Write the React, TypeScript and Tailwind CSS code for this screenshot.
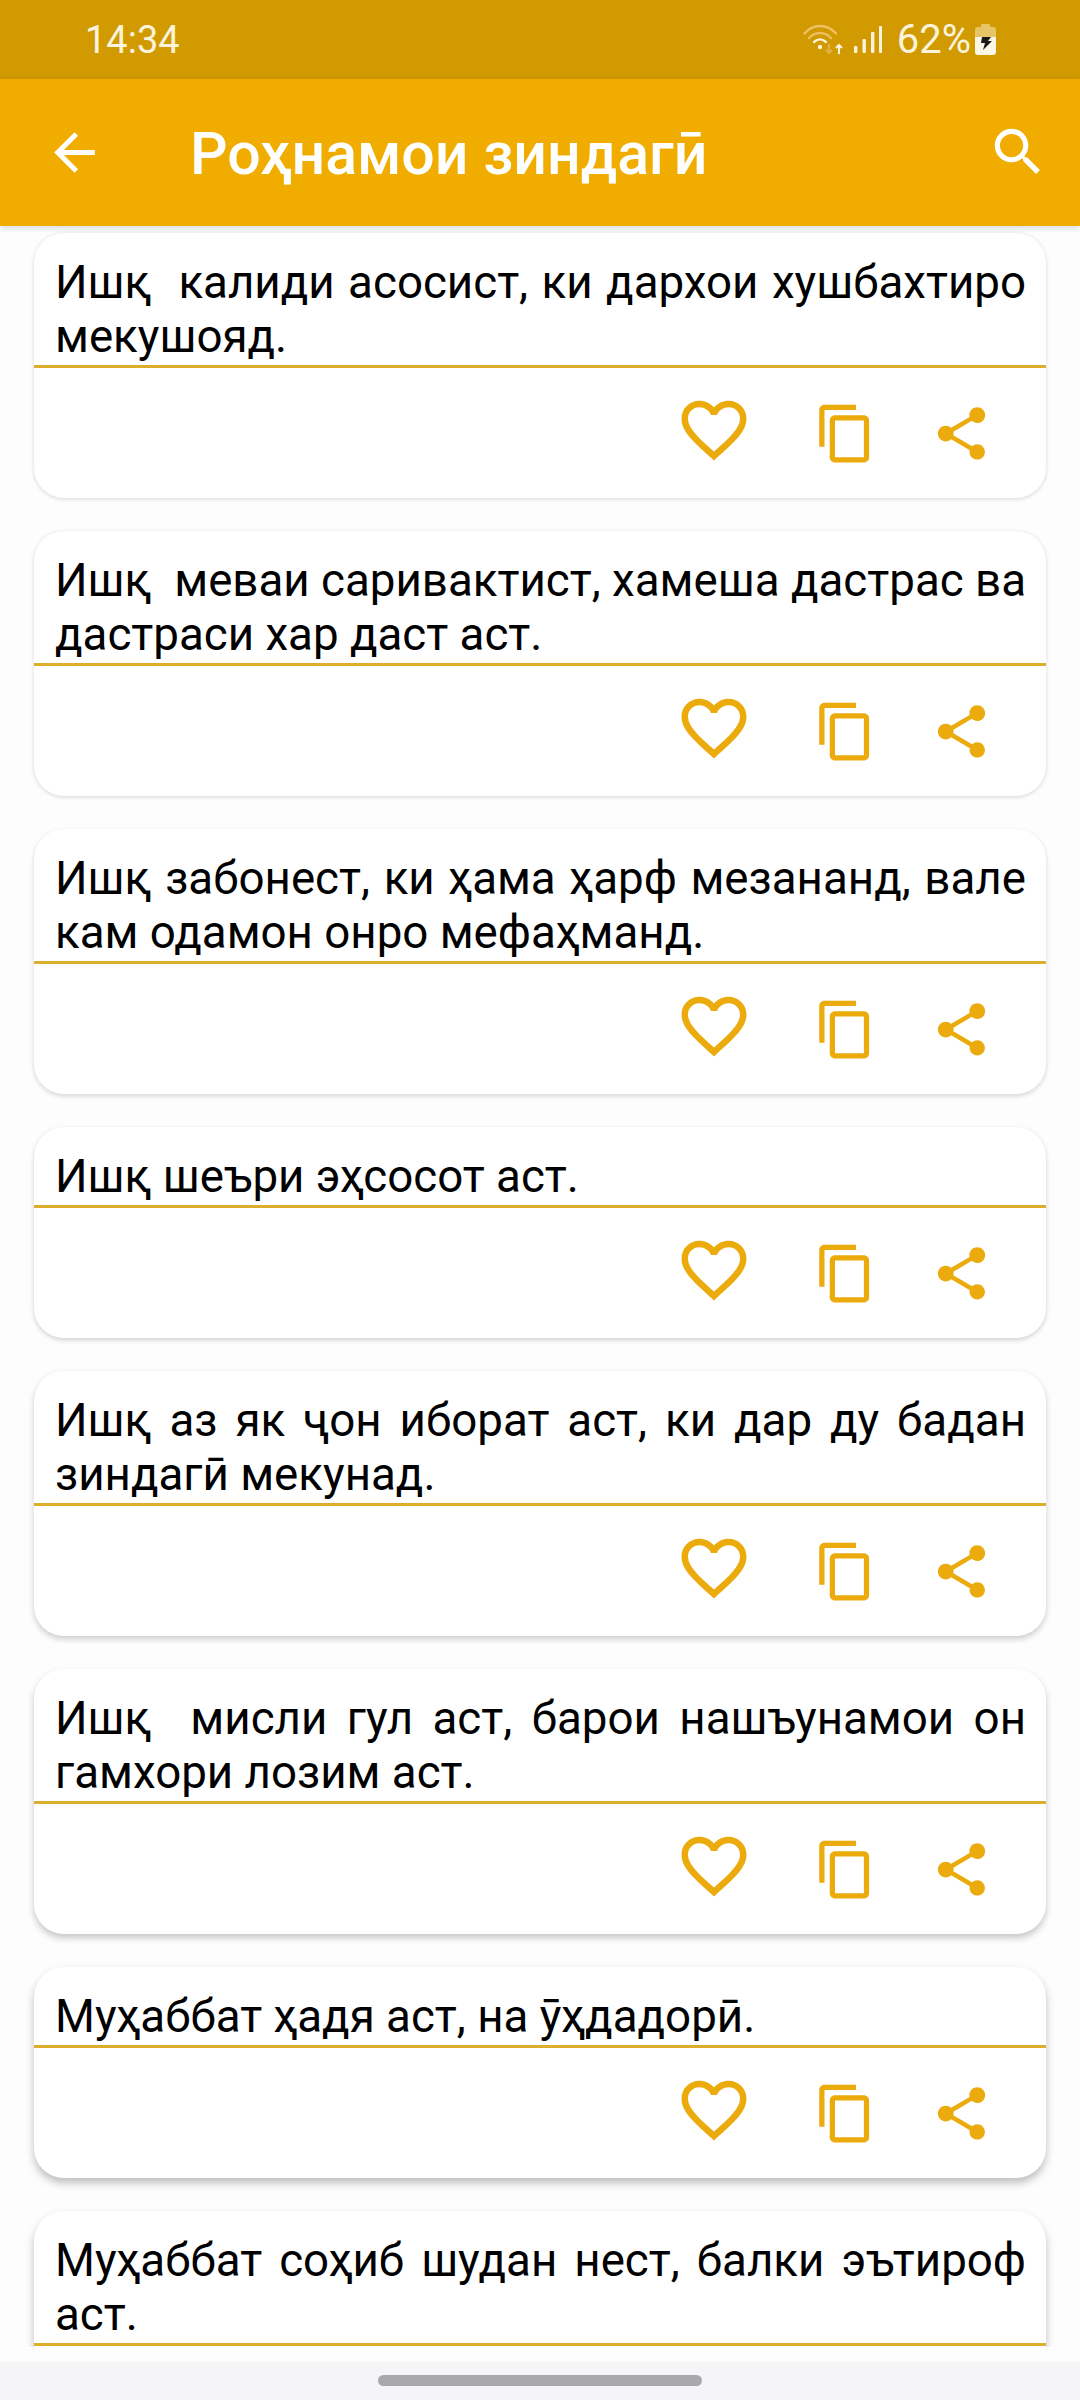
const HEART = "M16.5 3c-1.74 0-3.41.81-4.5 2.09C10.91 3.81 9.24 3 7.5 3 4.42 3 2 5.42 2 8.5c0 3.78 3.4 6.86 8.55 11.54L12 21.35l1.45-1.32C18.6 15.36 22 12.28 22 8.5 22 5.42 19.58 3 16.5 3zm-4.4 15.55l-.1.1-.1-.1C7.14 14.24 4 11.39 4 8.5 4 6.5 5.5 5 7.5 5c1.54 0 3.04.99 3.57 2.36h1.87C13.46 5.99 14.96 5 16.5 5c2 0 3.5 1.5 3.5 3.5 0 2.89-3.14 5.74-7.9 10.05z";
const COPY = "M16 1H4c-1.1 0-2 .9-2 2v14h2V3h12V1zm3 4H8c-1.1 0-2 .9-2 2v14c0 1.1.9 2 2 2h11c1.1 0 2-.9 2-2V7c0-1.1-.9-2-2-2zm0 16H8V7h11v14z";
const SHARE = "M18 16.08c-.76 0-1.44.3-1.96.77L8.91 12.7c.05-.23.09-.46.09-.7s-.04-.47-.09-.7l7.05-4.11c.54.5 1.25.81 2.04.81 1.66 0 3-1.34 3-3s-1.34-3-3-3-3 1.34-3 3c0 .24.04.47.09.7L8.04 9.81C7.5 9.31 6.79 9 6 9c-1.66 0-3 1.34-3 3s1.34 3 3 3c.79 0 1.5-.31 2.04-.81l7.12 4.16c-.05.21-.08.43-.08.65 0 1.61 1.31 2.92 2.92 2.92 1.61 0 2.92-1.31 2.92-2.92s-1.31-2.92-2.92-2.92z";

function Icon({ d, className }: { d: string; className: string }) {
  return (
    <svg viewBox="0 0 24 24" className={className} fill="currentColor">
      <path d={d} />
    </svg>
  );
}

const quotes = [
  { text: "Ишқ  калиди асосист, ки дархои хушбахтиро мекушояд.", shadow: "shadow-[0_1px_4px_rgba(0,0,0,0.16)]" },
  { text: "Ишқ  меваи саривактист, хамеша дастрас ва дастраси хар даст аст.", shadow: "shadow-[0_1px_4px_rgba(0,0,0,0.16)]" },
  { text: "Ишқ забонест, ки ҳама ҳарф мезананд, вале кам одамон онро мефаҳманд.", shadow: "shadow-[0_2px_5px_rgba(0,0,0,0.16)]" },
  { text: "Ишқ шеъри эҳсосот аст.", shadow: "shadow-[0_2px_5px_rgba(0,0,0,0.18)]" },
  { text: "Ишқ аз як ҷон иборат аст, ки дар ду бадан зиндагӣ мекунад.", shadow: "shadow-[0_3px_6px_rgba(0,0,0,0.2)]" },
  { text: "Ишқ  мисли гул аст, барои нашъунамои он гамхори лозим аст.", shadow: "shadow-[0_4px_7px_rgba(0,0,0,0.22)]" },
  { text: "Муҳаббат ҳадя аст, на ӯҳдадорӣ.", shadow: "shadow-[0_5px_8px_rgba(0,0,0,0.25)]" },
  { text: "Муҳаббат соҳиб шудан нест, балки эътироф аст.", shadow: "shadow-[0_5px_8px_rgba(0,0,0,0.25)]" },
];

function Card({ text, shadow }: { text: string; shadow: string }) {
  return (
    <div className={`mx-[34px] mb-[33px] shrink-0 rounded-[30px] bg-white ${shadow}`}>
      <p className="whitespace-pre-wrap pb-[1px] pl-[21px] pr-[20px] pt-[23px] text-justify text-[45.7px] leading-[54px] text-black [font-family:Roboto,sans-serif]">
        {text}
      </p>
      <div className="h-[3px] bg-[#dcae2c]" />
      <div className="flex h-[130px] items-center justify-end pr-[53px] text-[#ecab0c]">
        <Icon d={HEART} className="mb-[6px] h-[78px] w-[78px]" />
        <Icon d={COPY} className="ml-[61px] h-[63px] w-[63px]" />
        <Icon d={SHARE} className="ml-[53px] h-[63px] w-[63px]" />
      </div>
    </div>
  );
}

function StatusIcons() {
  return (
    <div className="flex items-center text-[#fbf3dc]">
      <svg viewBox="0 0 41 31" className="h-[31px] w-[41px]" fill="none">
        <path d="M1.5 9.5 C10 -0.5 24 -0.5 33 9.5" stroke="#eec166" strokeWidth="2.4" strokeLinecap="round" />
        <path d="M6 14 C12 7.5 22 7.5 28 14" stroke="#eec166" strokeWidth="2.4" strokeLinecap="round" />
        <path d="M11 18 C15 14.5 19 14.5 23 18" stroke="#fbf3dc" strokeWidth="2.4" strokeLinecap="round" />
        <circle cx="17" cy="23" r="2.2" fill="#fbf3dc" />
        <path d="M26 20v9M23 26l3 3 3-3" stroke="#e5b04c" strokeWidth="2" />
        <path d="M36 30v-9M33 24l3-3 3 3" stroke="#fbf3dc" strokeWidth="2" />
      </svg>
      <svg viewBox="0 0 28 27" className="ml-[10px] h-[27px] w-[28px]" fill="#fbf3dc">
        <rect x="0" y="20" width="3.4" height="7" rx="1" />
        <rect x="8.5" y="13" width="3.4" height="14" rx="1" />
        <rect x="17" y="6" width="3.4" height="21" rx="1" />
        <rect x="25" y="0" width="3" height="27" rx="1" />
      </svg>
      <span className="ml-[15px] text-[40px] leading-[44px] [font-family:Roboto,sans-serif]">62%</span>
      <svg viewBox="0 0 21 31" className="ml-[4px] h-[31px] w-[21px]">
        <rect x="6" y="0" width="9" height="4" rx="1" fill="#e8c468" />
        <path d="M0 6a3 3 0 0 1 3-3h15a3 3 0 0 1 3 3v7H0z" fill="#e8c468" />
        <path d="M0 13h21v15a3 3 0 0 1-3 3H3a3 3 0 0 1-3-3z" fill="#fbf6e6" />
        <path d="M7 13h9l-3 4h4l-9 9 2-7H6z" fill="#1a1a1a" />
      </svg>
    </div>
  );
}

export default function App() {
  return (
    <div className="flex h-[2400px] w-[1080px] flex-col overflow-hidden bg-[#fdfdfe]">
      <div className="flex h-[79px] shrink-0 items-center justify-between bg-[#d09a00] pl-[85px] pr-[84px] text-[#fbf3dc]">
        <span className="text-[38px] leading-[44px] [font-family:Roboto,sans-serif]">14:34</span>
        <StatusIcons />
      </div>
      <div className="z-10 flex h-[147px] shrink-0 items-center bg-[#f0ad00] pl-[44px] pr-[31px] text-white shadow-[0_2px_6px_rgba(0,0,0,0.15)]">
        <Icon d="M20 11H7.83l5.59-5.59L12 4l-8 8 8 8 1.41-1.41L7.83 13H20v-2z" className="h-[61px] w-[61px]" />
        <span className="ml-[85px] mt-[2px] flex-1 text-[59px] font-medium leading-[70px] [font-family:Roboto,sans-serif]">Роҳнамои зиндагӣ</span>
        <Icon d="M15.5 14h-.79l-.28-.27C15.41 12.59 16 11.11 16 9.5 16 5.91 13.09 3 9.5 3S3 5.91 3 9.5 5.91 16 9.5 16c1.61 0 3.09-.59 4.23-1.57l.27.28v.79l5 4.99L20.49 19l-4.99-5zm-6 0C7.01 14 5 11.99 5 9.5S7.01 5 9.5 5 14 7.01 14 9.5 11.99 14 9.5 14z" className="mb-[1px] h-[62px] w-[62px]" />
      </div>
      <div className="mb-[15px] flex min-h-0 flex-1 flex-col overflow-hidden pt-[7px]">
        {quotes.map((q) => (
          <Card key={q.text} text={q.text} shadow={q.shadow} />
        ))}
      </div>
      <div className="z-10 flex h-[38px] shrink-0 justify-center bg-[#f5f4f6] pt-[13px]">
        <div className="h-[11px] w-[324px] rounded-full bg-[#a9a8ab]" />
      </div>
    </div>
  );
}
